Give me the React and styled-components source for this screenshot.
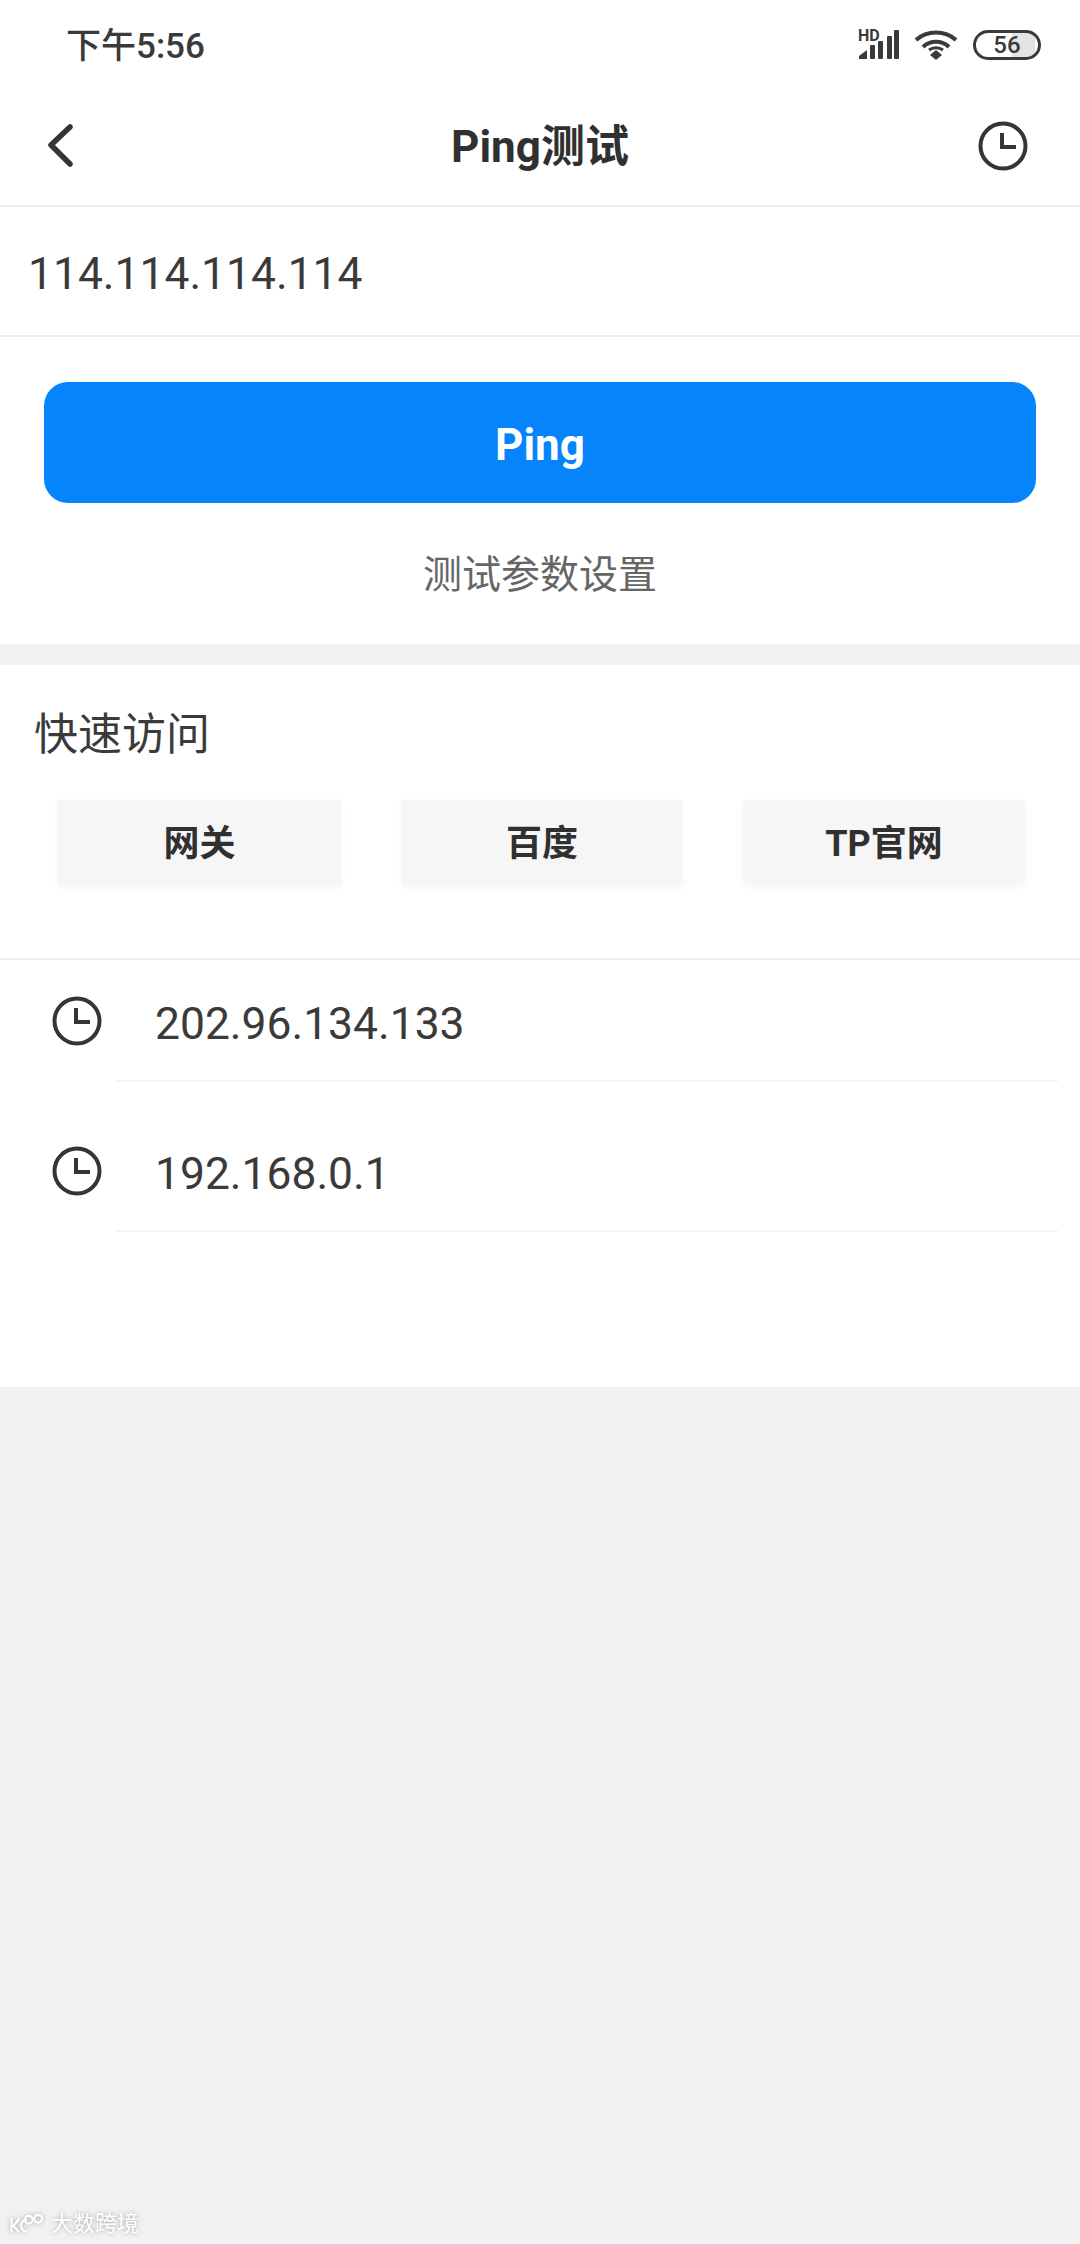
import styled, { createGlobalStyle } from 'styled-components';

const GlobalStyle = createGlobalStyle`
  html, body {
    margin: 0;
    padding: 0;
    background: #f1f1f3;
  }
  * {
    box-sizing: border-box;
  }
`;

const quickLinks = [
  { label: '网关', width: 283 },
  { label: '百度', width: 280 },
  { label: 'TP官网', width: 282 },
];
const history = ['202.96.134.133', '192.168.0.1'];

function ClockIcon() {
  return (
    <ClockSvg viewBox="0 0 50 50" fill="none" stroke="#353535" strokeWidth="4">
      <circle cx="25" cy="25" r="22.5" />
      <path d="M24 12v14h14" />
    </ClockSvg>
  );
}

function SignalIcon() {
  return (
    <svg width="44" height="30" viewBox="0 0 44 30" fill="#3a3a3a">
      <path d="M1 29v-3l8-6v9z" />
      <rect x="12" y="15" width="5" height="14" rx="1" />
      <rect x="20" y="11" width="5" height="18" rx="1" />
      <rect x="29" y="6" width="5" height="23" rx="1" />
      <rect x="36" y="0" width="5" height="29" rx="1" />
    </svg>
  );
}

function WifiIcon() {
  return (
    <svg width="44" height="30" viewBox="0 0 44 30" fill="none" stroke="#3a3a3a" strokeWidth="4">
      <path d="M2 10C13 0 31 0 42 10" />
      <path d="M9 17c7-7 19-7 26 0" />
      <path d="M22 20l6 5-6 5-6-5z" fill="#3a3a3a" stroke="none" />
      <path d="M15 20c4-3 10-3 14 0" strokeWidth="3" />
    </svg>
  );
}

function App() {
  return (
    <>
      <GlobalStyle />
      <Page>
        <TopCard>
          <StatusBar>
            <Time>下午5:56</Time>
            <StatusIcons>
              <SignalGroup>
                <HdLabel>HD</HdLabel>
                <SignalIcon />
              </SignalGroup>
              <WifiIcon />
              <Battery>56</Battery>
            </StatusIcons>
          </StatusBar>
          <NavBar>
            <svg width="30" height="46" viewBox="0 0 30 46" fill="none" stroke="#353535" strokeWidth="5.5" strokeLinecap="round" strokeLinejoin="round">
              <path d="M23 4L4 22l19 19" />
            </svg>
            <NavTitle>Ping测试</NavTitle>
            <ClockIcon />
          </NavBar>
          <AddressRow>114.114.114.114</AddressRow>
          <PingButton>Ping</PingButton>
          <SettingsLink>测试参数设置</SettingsLink>
        </TopCard>

        <QuickSection>
          <SectionTitle>快速访问</SectionTitle>
          <QuickRow>
            {quickLinks.map((link) => (
              <QuickButton key={link.label} $width={link.width}>{link.label}</QuickButton>
            ))}
          </QuickRow>
        </QuickSection>

        <HistoryList>
          {history.map((ip) => (
            <HistoryRow key={ip}>
              <ClockIcon />
              <HistoryText>{ip}</HistoryText>
            </HistoryRow>
          ))}
        </HistoryList>

        <Watermark>
          <svg width="36" height="24" viewBox="0 0 42 24" fill="none" stroke="#ffffff" strokeWidth="2.5">
            <path d="M3 5v17M12 6L5 14l7 8" />
            <path d="M21 7a7 7 0 1 0 0 14" />
            <circle cx="23" cy="7" r="4.5" />
            <circle cx="34" cy="6" r="4.5" />
          </svg>
          <WatermarkText>大数跨境</WatermarkText>
        </Watermark>
      </Page>
    </>
  );
}

const Page = styled.div`
  position: relative;
  width: 1080px;
  height: 2244px;
  overflow: hidden;
  background: #f1f1f3;
  font-family: Roboto, "Noto Sans CJK SC", sans-serif;
  color: #353535;
`;
const TopCard = styled.div`
  height: 644px;
  background: #ffffff;
`;
const StatusBar = styled.div`
  height: 86px;
  padding: 29px 39px 0 66px;
  display: flex;
  justify-content: space-between;
  align-items: flex-start;
`;
const Time = styled.div`
  font-size: 35px;
  line-height: 36px;
  font-weight: 500;
  color: #3a3a3a;
`;
const StatusIcons = styled.div`
  display: flex;
  align-items: center;
  gap: 15px;
  margin-top: 1px;
`;
const SignalGroup = styled.div`
  position: relative;
  width: 44px;
  height: 30px;
  left: 3px;
`;
const HdLabel = styled.span`
  position: absolute;
  left: 0;
  top: -3px;
  font-size: 16px;
  line-height: 18px;
  font-weight: 700;
  color: #3a3a3a;
`;
const Battery = styled.div`
  width: 68px;
  height: 30px;
  border: 3px solid #3a3a3a;
  border-radius: 15px;
  background: linear-gradient(to right, #ffffff 0 58%, #e4e4e4 58% 95%, #ffffff 95%);
  font-size: 24px;
  line-height: 24px;
  font-weight: 500;
  text-align: center;
  color: #3a3a3a;
`;
const NavBar = styled.div`
  height: 121px;
  padding: 0 52px 0 47px;
  display: flex;
  justify-content: space-between;
  align-items: center;
  border-bottom: 2px solid #efefef;
`;
const NavTitle = styled.div`
  font-size: 44px;
  line-height: 52px;
  font-weight: 700;
  margin: 3px 0 0 25px;
  color: #303030;
`;
const ClockSvg = styled.svg`
  width: 50px;
  height: 50px;
  flex-shrink: 0;
`;
const AddressRow = styled.div`
  height: 130px;
  padding: 5px 0 0 28px;
  display: flex;
  align-items: center;
  font-size: 44.4px;
  color: #3a3a3a;
  border-bottom: 2px solid #ececec;
`;
const PingButton = styled.div`
  height: 121px;
  margin-top: 45px;
  margin-left: 44px;
  margin-right: 44px;
  padding-top: 5px;
  border-radius: 24px;
  background: #0584fb;
  color: #ffffff;
  font-size: 44px;
  font-weight: 700;
  display: flex;
  align-items: center;
  justify-content: center;
`;
const SettingsLink = styled.div`
  margin-top: 46px;
  text-align: center;
  font-size: 39px;
  line-height: 52px;
  color: #666666;
`;
const QuickSection = styled.div`
  height: 295px;
  margin-top: 21px;
  padding-top: 45px;
  background: #ffffff;
  border-bottom: 2px solid #ececec;
`;
const SectionTitle = styled.div`
  padding-left: 34px;
  font-size: 44px;
  line-height: 50px;
  color: #3a3a3a;
`;
const QuickRow = styled.div`
  margin-top: 40px;
  padding: 0 55px 0 58px;
  display: flex;
  justify-content: space-between;
`;
const QuickButton = styled.div`
  width: ${(props) => props.$width}px;
  height: 85px;
  padding-bottom: 6px;
  background: #f6f6f7;
  box-shadow: 0 2px 8px #f6f6f7;
  font-size: 36px;
  font-weight: 700;
  color: #303030;
  display: flex;
  align-items: center;
  justify-content: center;
`;
const HistoryList = styled.div`
  height: 427px;
  background: #ffffff;
`;
const HistoryRow = styled.div`
  height: 150px;
  padding: 0 0 36px 52px;
  display: flex;
  align-items: flex-end;
  gap: 53px;
  position: relative;

  /* the list is scrolled a little, so the first row is cut at the top */
  &:first-child {
    height: 122px;
  }

  &::after {
    content: '';
    position: absolute;
    left: 116px;
    right: 22px;
    bottom: 0;
    height: 2px;
    background: #f5f5f5;
  }
`;
const HistoryText = styled.div`
  font-size: 44.4px;
  line-height: 52px;
  color: #3a3a3a;
  margin-bottom: -4px;
`;
const Watermark = styled.div`
  position: absolute;
  left: 9px;
  bottom: 7px;
  display: flex;
  align-items: center;
  gap: 6px;
  filter: drop-shadow(0 0 2px #a8a8a8);
`;
const WatermarkText = styled.span`
  font-size: 22px;
  line-height: 26px;
  color: #ffffff;
`;

export default App;
